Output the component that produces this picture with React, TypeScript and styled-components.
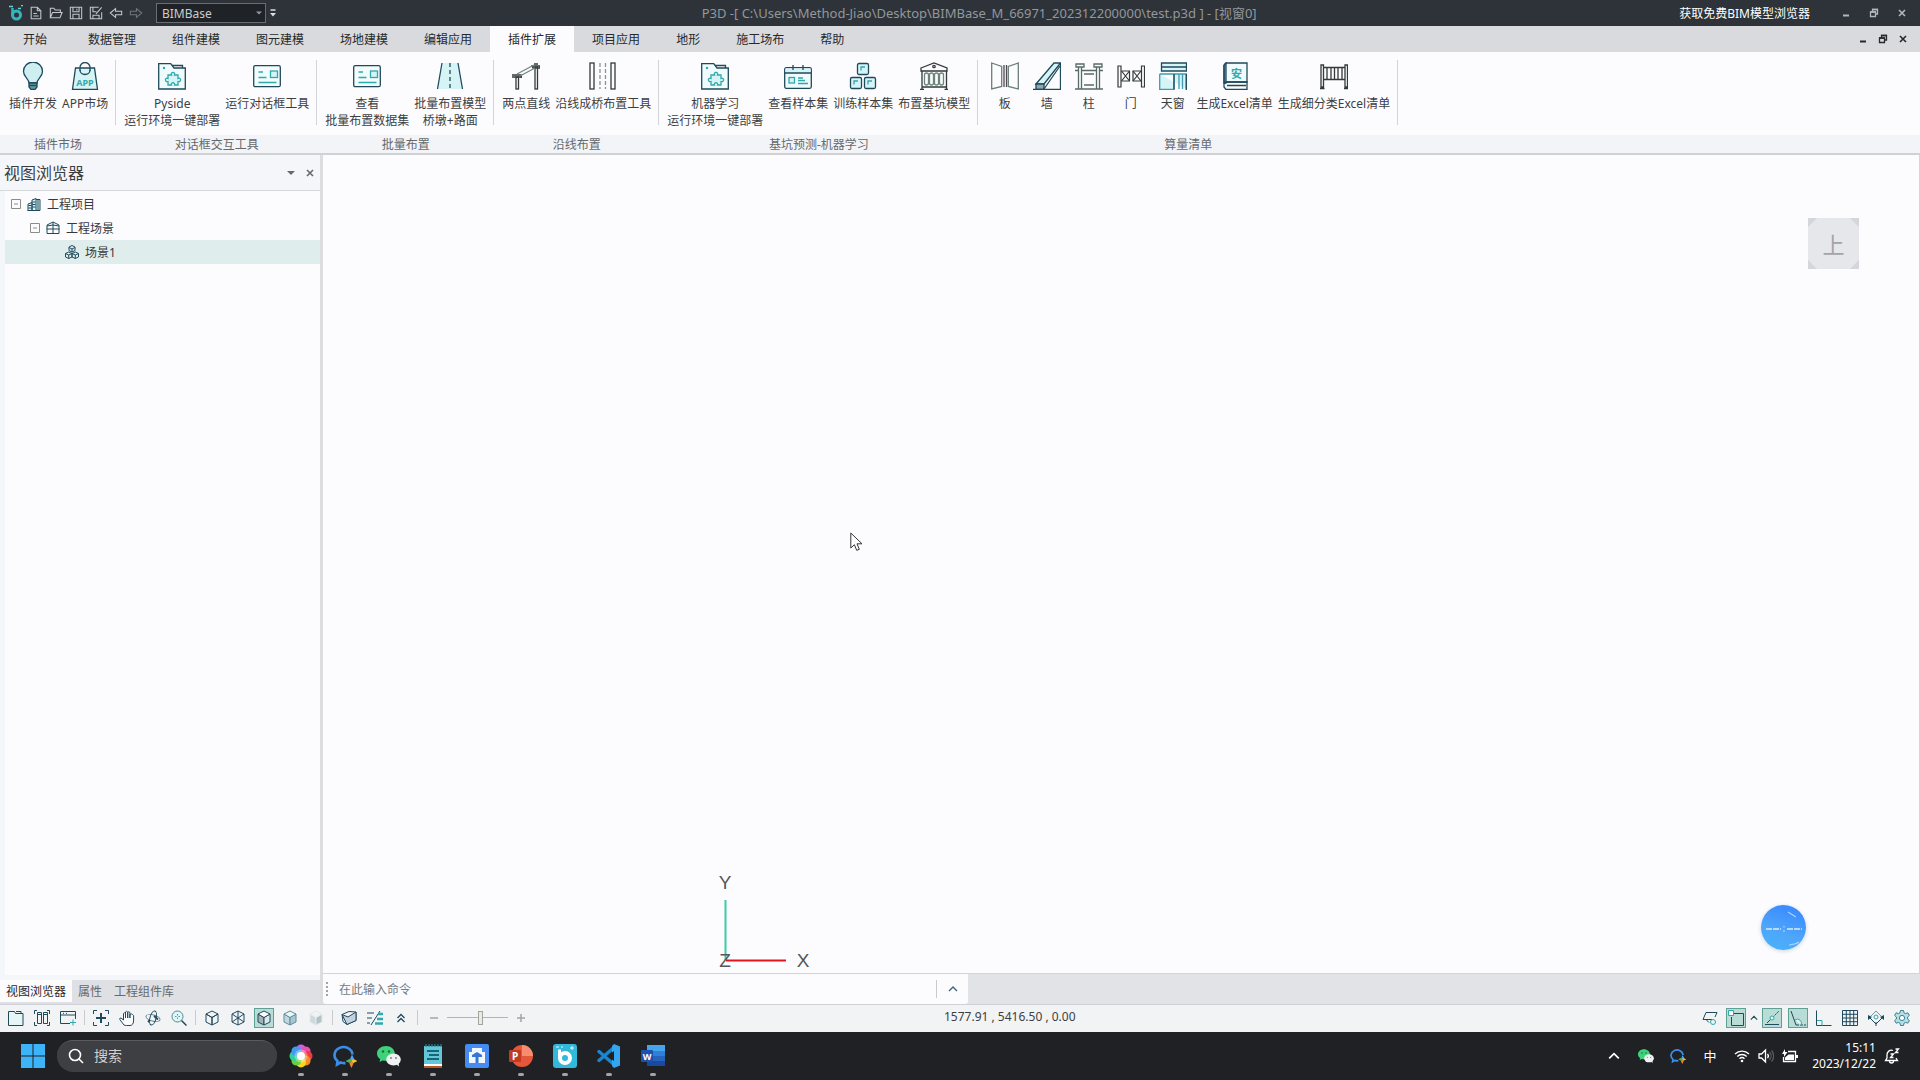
import React from "react";
import styled, { createGlobalStyle, css } from "styled-components";

const GlobalStyle = createGlobalStyle`
  *, *::before, *::after { box-sizing: border-box; }
  body {
    margin: 0;
    background: #fcfcfe;
    color: #3c3f42;
    font: 12px/17px "Noto Sans", "Noto Sans CJK SC", sans-serif;
  }
  button, input, select { font: inherit; color: inherit; }
  svg { flex: none; }
`;

const teal = "#2fa9ab";
const navy = "#1f4a5c";
const pale = "#d6f4f6";

/* ---------- layout ---------- */

const Shell = styled.div`
  display: flex;
  flex-direction: column;
  min-height: 100vh;
`;

const plainButton = css`
  display: inline-flex;
  align-items: center;
  justify-content: center;
  padding: 0;
  border: 0;
  background: none;
`;

const TitleBar = styled.header`
  display: flex;
  align-items: center;
  height: 26px;
  padding: 0 4px 0 6px;
  background: #2d3339;
  color: #94979b;
`;

const TitleTool = styled.button<{ $dim?: boolean }>`
  ${plainButton}
  width: 20px;
  height: 20px;
  color: ${(p) => (p.$dim ? "#70757a" : "#c4c7ca")};
`;

const ProductSelect = styled.select`
  appearance: none;
  width: 110px;
  height: 20px;
  margin-left: 10px;
  padding: 0 5px;
  border: 1px solid #6a6e72;
  border-radius: 0;
  background: #1f2327;
  color: #c9cbce;
`;

const SelectWrap = styled.label`
  display: flex;
  align-items: center;
  position: relative;
  & > svg { position: absolute; right: 4px; pointer-events: none; }
`;

const QuickMenu = styled.button`
  ${plainButton}
  width: 13px;
  height: 20px;
`;

const WindowTitle = styled.h1`
  flex: 1;
  margin: 0;
  font-size: 13px;
  font-weight: 400;
  text-align: center;
`;

const ViewerLink = styled.a`
  color: #ffffff;
  text-decoration: none;
  margin-right: 22px;
`;

const WindowButton = styled.button<{ $dark?: boolean }>`
  ${plainButton}
  width: ${(p) => (p.$dark ? 20 : 28)}px;
  height: 20px;
  color: ${(p) => (p.$dark ? "#26292c" : "#b4b7ba")};
`;

const TabBar = styled.nav`
  display: flex;
  height: 26px;
  background: #d9dade;
`;

const Tab = styled.button<{ $active?: boolean; $wide?: boolean }>`
  ${plainButton}
  padding: 1px ${(p) => (p.$wide ? 23 : 18)}px 0;
  background: ${(p) => (p.$active ? "#fcfcfe" : "transparent")};
  color: #26292c;
`;

const TabSpacer = styled.div`
  flex: 1;
`;

const TabWindowButtons = styled.div`
  display: flex;
  align-items: center;
  padding-right: 7px;
`;

const Ribbon = styled.div`
  display: flex;
  border-bottom: 2px solid #d0d1d3;
`;

const Group = styled.section<{ $fill?: boolean }>`
  display: flex;
  flex-direction: column;
  flex: ${(p) => (p.$fill ? 1 : "none")};
`;

const GroupBody = styled.div<{ $first?: boolean }>`
  display: flex;
  gap: 1px;
  height: 65px;
  margin: 8px 0 10px;
  padding: 0 5px 0 ${(p) => (p.$first ? 7 : 6)}px;
  border-right: 1px solid #d3d3d8;
`;

const GroupLabel = styled.h2`
  height: 18px;
  margin: 0;
  background: #f3f4f8;
  color: #66696c;
  font-size: 12px;
  font-weight: 400;
  line-height: 20px;
  text-align: center;
`;

const RibbonButton = styled.button`
  ${plainButton}
  flex-direction: column;
  justify-content: flex-start;
  gap: 5px;
  min-width: 41px;
  padding: 2px 2px 0;
  color: #3c3f42;
  white-space: pre;
`;

const Main = styled.main`
  display: flex;
  flex: 1;
`;

const SidePanel = styled.aside`
  display: flex;
  flex-direction: column;
  width: 323px;
  border-right: 3px solid #dcdde0;
  background: #f5f6fa;
`;

const PanelHeader = styled.div`
  display: flex;
  align-items: center;
  height: 36px;
  padding: 0 1px 0 4px;
  border-bottom: 1px solid #d6d8da;
`;

const PanelTitle = styled.h2`
  flex: 1;
  margin: 0;
  font-size: 16px;
  font-weight: 400;
  line-height: 24px;
`;

const PanelTool = styled.button`
  ${plainButton}
  width: 19px;
  height: 19px;
  color: #66696c;
`;

const Tree = styled.ul`
  flex: 1;
  margin: 0 0 5px 5px;
  padding: 1px 0 0;
  background: #fcfcfe;
  list-style: none;
`;

const TreeRow = styled.li<{ $level: number; $selected?: boolean }>`
  display: flex;
  align-items: center;
  gap: 6px;
  height: 24px;
  padding-left: ${(p) => 6 + p.$level * 19}px;
  background: ${(p) => (p.$selected ? "#dfeeed" : "transparent")};
  color: #36393c;
`;

const ExpandButton = styled.button`
  ${plainButton}
  width: 10px;
  height: 10px;
  color: #8b8e86;
`;

const ExpandGap = styled.span`
  width: 10px;
`;

const PanelTabs = styled.div`
  display: flex;
  height: 24px;
  padding-bottom: 2px;
  background: #dfe0e4;
`;

const PanelTab = styled.button<{ $active?: boolean }>`
  ${plainButton}
  padding: 0 6px;
  background: ${(p) => (p.$active ? "#fcfcfe" : "transparent")};
  color: ${(p) => (p.$active ? "#26292c" : "#66696c")};
`;

const Workspace = styled.div`
  display: flex;
  flex: 1;
  flex-direction: column;
`;

const Viewport = styled.div`
  position: relative;
  flex: 1;
  border-right: 1px solid #d6d6da;
  background: #fcfcfe;
`;

const ViewCube = styled.button`
  ${plainButton}
  position: absolute;
  top: 63px;
  right: 60px;
  width: 51px;
  height: 51px;
  background:
    linear-gradient(135deg, #d4d6dc 6px, transparent 7px),
    linear-gradient(225deg, #d4d6dc 6px, transparent 7px),
    linear-gradient(45deg, #d4d6dc 6px, transparent 7px),
    linear-gradient(315deg, #d4d6dc 6px, #e5e7ea 7px);
  color: #a2a4a8;
  font-size: 22px;
  line-height: 30px;
`;

const AssistBall = styled.button`
  ${plainButton}
  position: absolute;
  right: 113px;
  bottom: 23px;
  width: 45px;
  height: 45px;
  border-radius: 50%;
  background: linear-gradient(200deg, #3b8cff 15%, #4ea6fa 60%, #48b4fb);
  box-shadow: 0 1px 4px #c8d4e4;
`;

const Axes = styled.svg`
  position: absolute;
  bottom: 0;
  left: 387px;
  font-family: "Liberation Sans", sans-serif;
`;

const Pointer = styled.svg`
  position: absolute;
  top: 377px;
  left: 527px;
`;

const CommandRow = styled.div`
  display: flex;
  height: 31px;
  border-top: 1px solid #d3d4d8;
  background: #e2e3e6;
`;

const CommandBox = styled.div`
  display: flex;
  align-items: center;
  width: 645px;
  padding-left: 3px;
  border-radius: 0 0 3px 3px;
  background: #fcfcfe;
`;

const Grip = styled.span`
  width: 2px;
  height: 14px;
  margin-right: 6px;
  background: repeating-linear-gradient(#a0a2a4 0 2px, transparent 2px 4px);
`;

const CommandInput = styled.input`
  flex: 1;
  padding: 0 5px;
  border: 0;
  outline: 0;
  background: transparent;
  &::placeholder { color: #77797c; opacity: 1; }
`;

const CommandToggle = styled.button`
  ${plainButton}
  width: 32px;
  height: 18px;
  border-left: 1px solid #c8cacc;
  color: #41657a;
`;

const StatusBar = styled.footer`
  display: flex;
  align-items: center;
  height: 28px;
  padding: 0 5px 2px 3px;
  border-top: 1px solid #d0d1d6;
  background: #f1f3f5;
`;

const StatusTools = styled.div<{ $end?: boolean }>`
  display: flex;
  align-items: center;
  margin-left: ${(p) => (p.$end ? "auto" : "0")};
`;

const StatusTool = styled.button<{ $on?: boolean; $narrow?: boolean }>`
  ${plainButton}
  width: ${(p) => (p.$narrow ? 10 : 20)}px;
  height: 20px;
  margin: 0 ${(p) => (p.$narrow ? 0 : 3)}px;
  color: ${navy};
  ${(p) =>
    p.$on &&
    css`
      background: #b9dcd6;
      box-shadow: inset 0 0 0 1px #5fa095;
    `}
`;

const Divider = styled.span`
  width: 1px;
  height: 15px;
  margin: 0 3px;
  background: #c8cacd;
`;

const ZoomSlider = styled.input`
  appearance: none;
  width: 61px;
  height: 16px;
  margin: 0;
  background: linear-gradient(#b4b5b2, #b4b5b2) center / 100% 1px no-repeat;
  &::-webkit-slider-thumb {
    appearance: none;
    width: 5px;
    height: 14px;
    border: 1px solid #a3a49c;
    background: #e9eae6;
  }
`;

const Coordinates = styled.output`
  align-self: flex-start;
  margin-left: 410px;
  line-height: 24px;
  white-space: pre;
`;

const Taskbar = styled.footer`
  display: flex;
  align-items: center;
  height: 48px;
  padding: 0 16px 0 21px;
  background: #202125;
  color: #ffffff;
`;

const StartButton = styled.button`
  ${plainButton}
  width: 24px;
  height: 24px;
`;

const SearchBox = styled.label`
  display: flex;
  align-items: center;
  gap: 10px;
  width: 220px;
  height: 32px;
  margin: 0 2px 0 12px;
  padding: 0 11px 2px;
  border-top: 1px solid #5a5b5e;
  border-radius: 16px;
  background: #3e3f42;
`;

const SearchInput = styled.input`
  flex: 1;
  min-width: 0;
  padding: 0;
  border: 0;
  outline: 0;
  background: transparent;
  font-size: 14px;
  &::placeholder { color: #d0d1d3; opacity: 1; }
`;

const TaskButton = styled.button`
  ${plainButton}
  flex-direction: column;
  gap: 5px;
  width: 44px;
  height: 48px;
  padding-top: 8px;
  &::after {
    content: "";
    width: 6px;
    height: 3px;
    border-radius: 2px;
    background: #a3a4a6;
  }
`;

const Tray = styled.div`
  display: flex;
  align-items: center;
  margin-left: auto;
`;

const TrayButton = styled.button<{ $tight?: boolean }>`
  ${plainButton}
  width: ${(p) => (p.$tight ? 24 : 32)}px;
  height: 32px;
`;

const InputMode = styled.span`
  font-size: 13px;
`;

const QuickSettings = styled.div`
  display: flex;
  margin-left: 4px;
`;

const Clock = styled.time`
  width: 74px;
  margin-right: 4px;
  line-height: 16px;
  text-align: right;
`;

/* ---------- drawings ---------- */

type IconProps = { size?: number; box?: number; w?: number; children: React.ReactNode };

const Icon = ({ size = 16, box, w = 1, children }: IconProps) => (
  <svg
    width={size}
    height={size}
    viewBox={`0 0 ${box ?? size} ${box ?? size}`}
    fill="none"
    stroke="currentColor"
    strokeWidth={w}
    aria-hidden="true"
  >
    {children}
  </svg>
);

const RIcon = ({ children }: { children: React.ReactNode }) => (
  <svg width="28" height="28" viewBox="0 0 28 28" fill="none" stroke={navy} strokeWidth="1.3" aria-hidden="true">
    {children}
  </svg>
);

const Bulb = () => (
  <RIcon>
    <path d="M10 21c0-4-5.500-6-5.500-11.500a9.500 9.500 0 0 1 19 0C23.500 15 18 17 18 21z" fill="#cdeff0" />
    <path d="M10 21h8v4l-2 2.500h-4L10 25z" fill="#5f98a0" />
    <path d="M10 23.500h8" />
  </RIcon>
);

const AppBag = () => (
  <RIcon>
    <path d="M4.500 6h19l3 21.400h-25z" fill={pale} />
    <path d="M9 9V5.500a5 5 0 0 1 10 0V9" />
    <path d="M9 8a5 4.500 0 0 0 10 0" />
    <text x="14" y="23.500" textAnchor="middle" fontSize="9" fontWeight="700" fill={teal} stroke="none">
      APP
    </text>
  </RIcon>
);

const PuzzleFolder = () => (
  <RIcon>
    <path d="M.7 27V1.700h12L16 6h11.300v21z" fill="#effbfc" />
    <path d="M14 3.500h10.500V6" />
    <circle cx="6" cy="6" r="1.200" fill={teal} stroke="none" />
    <path
      d="M10 13h3.500c-1.500-3.500 4.500-3.500 3 0H20v3.500c3.500-1.500 3.500 4 0 3V23h-3.500c1-3-4-3-3 0H10v-3.500c-3.500 1-3.500-4.500 0-3z"
      fill={pale}
      stroke={teal}
    />
  </RIcon>
);

const CardIcon = () => (
  <RIcon>
    <rect x=".7" y="3.700" width="26.600" height="21" rx="1.500" fill="#f2fcfd" />
    <rect x="17.500" y="9" width="7" height="6.500" fill={pale} stroke={teal} />
    <path d="M5.500 10H10M5.500 15.500h8M5.500 20.500h18" stroke={teal} />
  </RIcon>
);

const RoadIcon = () => (
  <RIcon>
    <path d="M7 1h15l4 26H2z" fill={pale} stroke="none" />
    <path d="M6 1L1.500 27M22 1l4.500 26" />
    <path d="M14 1v26" strokeDasharray="4 3" />
  </RIcon>
);

const TwoPointIcon = () => (
  <RIcon>
    <g stroke="#33393c">
      <rect x="4" y="15" width="2.500" height="12" />
      <rect x="23" y="5" width="2.500" height="22" />
      <path d="M0 15h10M0 13h9v3M20 4h8v2h-7zM22 2h4" />
      <path d="M5 12L22 3M8 14L23 6" stroke="#75857e" />
    </g>
  </RIcon>
);

const BridgeLineIcon = () => (
  <RIcon>
    <g stroke="#33393c">
      <rect x="1" y="1" width="4" height="26" />
      <rect x="22" y="1" width="4" height="26" />
      <path d="M11 1v26M16.500 1v26" stroke="#8b9297" strokeDasharray="4 2" />
    </g>
  </RIcon>
);

const CalendarIcon = () => (
  <RIcon>
    <rect x=".7" y="5.700" width="26.600" height="20.600" rx="1.500" fill="#effbfc" />
    <path d="M1.400 6.400h25.200v4H1.400z" fill={pale} stroke="none" />
    <path d="M.7 11h26.600M9 3v5M19 3v5" />
    <rect x="5" y="15.500" width="5.500" height="5.500" fill={pale} stroke={teal} />
    <path d="M14 16h5M14 18.500h7M14 21.500h10" stroke={teal} />
  </RIcon>
);

const BlocksIcon = () => (
  <RIcon>
    <g fill={pale}>
      <rect x="8.500" y="1.500" width="11" height="11" rx="1.500" />
      <rect x="1.500" y="15.500" width="11" height="11" rx="1.500" />
      <rect x="15.500" y="15.500" width="11" height="11" rx="1.500" />
    </g>
    <path d="M12 8.500V5h4M5 22.500V19h4M19 22.500V19h4" stroke={teal} />
  </RIcon>
);

const PitIcon = () => (
  <RIcon>
    <g stroke="#33393c">
      <path d="M1 6l13-5 13 5v3H1zM2 9v18M26.500 9v18M2 25h24.500M0 27.500h4M24.500 27.500h3.500" />
      <circle cx="14" cy="4.500" r="1.200" />
      <g stroke="#6c8579">
        <rect x="4.500" y="11" width="4" height="12" rx="2" />
        <rect x="9.500" y="11" width="4" height="12" rx="2" />
        <rect x="14.500" y="11" width="4" height="12" rx="2" />
        <rect x="19.500" y="11" width="4" height="12" rx="2" />
      </g>
    </g>
  </RIcon>
);

const SlabIcon = () => (
  <RIcon>
    <g stroke="#6c7f76">
      <path d="M.7 1l10 3.500v20L.7 27zM27.300 1l-10 3.500v20l10 2.500z" />
      <path d="M13 3v22M15.500 3v22" stroke="#4c4c52" />
    </g>
  </RIcon>
);

const WallIcon = () => (
  <RIcon>
    <path d="M3 22L21 1h6.500L11 22z" fill={pale} />
    <path d="M3 22h8v5.300H3z" fill="#8fa9b4" />
    <path d="M0 27.400h27.500V1M11 27L27 4" />
  </RIcon>
);

const ColumnIcon = () => (
  <RIcon>
    <g stroke="#586a68">
      <path d="M1 2h8v3H1zM19 2h8v3h-8zM3.500 5v22M6.500 5v22M21.500 5v22M24.500 5v22" />
      <path d="M0 8.500h3M7 8.500h14M25 8.500h3M9 12h10M9 23h10M0 27h28" />
    </g>
  </RIcon>
);

const DoorIcon = () => (
  <RIcon>
    <g stroke="#33393c" strokeWidth="1.2">
      <path d="M1 4h3v21H1zM24.500 4h3v21h-3z" />
      <path d="M4.500 9h8v10h-8M24 9h-8v10h8" />
      <path d="M4.500 9l8 10M12.500 9l-8 10M16 9l8 10M24 9l-8 10" />
    </g>
  </RIcon>
);

const SkylightIcon = () => (
  <RIcon>
    <path d="M2.500 1h25v8h-25zM2.500 5h25" fill={pale} />
    <path d="M.7 12h26.600v15M20 12v15M23.500 12v15M.7 12v15.300H15V12" fill={pale} stroke="#3f9cb0" />
    <path d="M15 12v15.500M27.300 12v16" />
  </RIcon>
);

const BookIcon = () => (
  <RIcon>
    <path d="M5 1h21v19H4V2z" fill="#effbfc" />
    <path d="M3 3l2-2v20H3z" fill="#8fb4c0" />
    <path d="M3 3v22l2 2.500h21V20H5l-2 2M6 23.500h19" />
    <text x="15.500" y="15.500" textAnchor="middle" fontSize="11" fontWeight="700" fill={teal} stroke="none">
      安
    </text>
  </RIcon>
);

const FenceIcon = () => (
  <RIcon>
    <g stroke="#33393c">
      <path d="M1 3h2.500v22H1zM25 3h2.500v22H25zM0 26.500h4.500M24 26.500h4.500M3.500 5.500H25M3.500 17.500H25M7 5.500v12M11 5.500v12M14.500 5.500v12M18 5.500v12M22 5.500v12" />
    </g>
  </RIcon>
);

const Chevron = ({ size = 10 }: { size?: number }) => (
  <Icon size={size} box={10} w={1.4}>
    <path d="M1 7l4-4 4 4" />
  </Icon>
);

const CaretDown = ({ size = 8 }: { size?: number }) => (
  <Icon size={size} box={8}>
    <path d="M0 2h8L4 6z" fill="currentColor" stroke="none" />
  </Icon>
);

const MinIcon = () => (
  <Icon size={10}>
    <path d="M2 7.500h6" strokeWidth="2" />
  </Icon>
);

const RestoreIcon = () => (
  <Icon size={10}>
    <path d="M1.500 4h5v4.500h-5zM3.500 4V1.500h5V6h-2" strokeWidth="1.300" />
    <path d="M1 4h6M3 1.500h6" strokeWidth="1.500" />
  </Icon>
);

const CloseIcon = () => (
  <Icon size={10}>
    <path d="M2 2l6 6M8 2L2 8" strokeWidth="1.600" />
  </Icon>
);

const Cube = ({ left = "none", right = "none", top = "none", line = navy }) => (
  <Icon size={16}>
    <g stroke={line} strokeLinejoin="round">
      <path d="M2 4l6 3.500V15l-6-3z" fill={left} />
      <path d="M14 4L8 7.500V15l6-3z" fill={right} />
      <path d="M8 1l6 3-6 3.500L2 4z" fill={top} />
    </g>
  </Icon>
);

const WeChat = ({ size = 24 }: { size?: number }) => (
  <Icon size={size} box={24}>
    <g stroke="none">
      <path d="M9 2C4 2 0 5.300 0 9.500c0 2.400 1.200 4.300 3.200 5.700L2.500 18l3.200-1.600c1 .3 2.200.4 3.300.4 5 0 8.800-3.300 8.800-7.300S14 2 9 2z" fill="#3fd27b" />
      <ellipse cx="16.500" cy="15.500" rx="7.300" ry="6" fill="#f0f1f2" />
      <path d="M19 20l3 2.500-.5-4z" fill="#f0f1f2" />
      <circle cx="6" cy="7.500" r="1.200" fill="#1a6e3e" />
      <circle cx="12" cy="7.500" r="1.200" fill="#1a6e3e" />
      <circle cx="14" cy="14" r=".9" fill="#777" />
      <circle cx="19" cy="14" r=".9" fill="#777" />
    </g>
  </Icon>
);

const WeCom = ({ size = 24 }: { size?: number }) => (
  <Icon size={size} box={24}>
    <path d="M19.500 10.500a9 8 0 1 0-15 6.500L4 20.500l3.500-2a11 11 0 0 0 5 .6" stroke="#3a8ee8" strokeWidth="2.600" />
    <path d="M19 10.500l2.200 4.500-2.200 2-2-2z" fill="#4aa5f5" stroke="none" />
    <path d="M24.500 17L20 19.200 18 17l2.500-2z" fill="#f7c22b" stroke="none" />
    <path d="M18.500 24l-2.200-4.500 2.200-2.500 2 2.500z" fill="#f08a24" stroke="none" />
    <path d="M12.500 17l4.500-2.200L19 17l-2.500 2z" fill="#52b551" stroke="none" />
  </Icon>
);

const petals = ["#c565ea", "#ee4fae", "#ee3b3b", "#f58a28", "#f3d723", "#6dcf3c", "#2fd09a", "#3f9cf0"];

const PinWheel = () => (
  <Icon size={24}>
    <g stroke="none">
      {petals.map((c, i) => (
        <circle key={c} cx="12" cy="5.500" r="5" fill={c} transform={`rotate(${i * 45} 12 12)`} />
      ))}
      <path d="M12 5.500A6.500 6.500 0 0 1 12 18.500 6.500 6.500 0 0 1 12 5.500z" fill="#ffffff" opacity=".35" />
      <circle cx="12" cy="12" r="4" fill="#ffffff" />
    </g>
  </Icon>
);

const Notepad = () => (
  <Icon size={24}>
    <g stroke="none">
      <path d="M3 2h18v19H3z" fill="#64c6d6" />
      <path d="M3 20h18v2H3z" fill="#ffffff" />
      <path d="M3 22h18v2H3z" fill="#b5562c" />
    </g>
    <path d="M5 0v3M8 0v3M11 0v3M14 0v3M17 0v3M20 0v3" stroke="#2f8191" strokeWidth="1.200" />
    <path d="M6 7h12M8 11h10M6 15h12" stroke="#16667a" strokeWidth="2" />
  </Icon>
);

const BlueTool = () => (
  <Icon size={24}>
    <g stroke="none">
      <rect width="24" height="24" rx="2" fill="#458cf2" />
      <path d="M4 8h3V4h10v4h3v11H4z" fill="#f2f7ff" />
      <path d="M12 8l5 3v2h-3.500v6h-3v-6H7v-2z" fill="#3577d4" />
    </g>
  </Icon>
);

const PowerPoint = () => (
  <Icon size={24}>
    <g stroke="none">
      <circle cx="13" cy="12" r="11" fill="#e5573a" />
      <path d="M13 1a11 11 0 0 1 11 11H13z" fill="#f78d70" />
      <rect y="6" width="12" height="12" rx="1" fill="#bf3a1e" />
      <text x="6" y="16" textAnchor="middle" fontSize="10" fontWeight="700" fill="#ffffff">
        P
      </text>
    </g>
  </Icon>
);

const BimApp = () => (
  <Icon size={24}>
    <rect width="24" height="24" rx="3" fill="#32b8d8" stroke="none" />
    <circle cx="12" cy="14" r="5" stroke="#ffffff" strokeWidth="4" />
    <path d="M6.500 5.500V14" stroke="#ffffff" strokeWidth="3" />
    <path d="M17 4h4M19 2v4M3 3h3M8 3h2" stroke="#dff8fb" />
  </Icon>
);

const VsCode = () => (
  <Icon size={24}>
    <path d="M2 7.500L17.500 21M2 16.500L17.500 3" stroke="#1a86cf" strokeWidth="3.400" strokeLinecap="round" />
    <path d="M17 0l6 2.500v19L17 24l-2-2V2z" fill="#35a5ee" stroke="none" />
    <path d="M17 7v10l-6.500-5z" fill="#202125" stroke="none" />
  </Icon>
);

const Word = () => (
  <Icon size={24}>
    <g stroke="none">
      <path d="M6 1h18v7H6z" fill="#46a4ee" />
      <path d="M6 7h18v5H6z" fill="#2f7fd9" />
      <path d="M6 12h18v5H6z" fill="#2563bd" />
      <path d="M6 17h18v5H6z" fill="#1a4aa0" />
      <rect y="6" width="12" height="12" rx="1" fill="#1c52ad" />
      <text x="6" y="15.500" textAnchor="middle" fontSize="9" fontWeight="700" fill="#ffffff">
        W
      </text>
    </g>
  </Icon>
);

/* ---------- data ---------- */

const tabs = ["开始", "数据管理", "组件建模", "图元建模", "场地建模", "编辑应用", "插件扩展", "项目应用", "地形", "施工场布", "帮助"];

const groups: { name: string; items: [string, React.ReactNode][] }[] = [
  { name: "插件市场", items: [["插件开发", <Bulb />], ["APP市场", <AppBag />]] },
  { name: "对话框交互工具", items: [["Pyside\n运行环境一键部署", <PuzzleFolder />], ["运行对话框工具", <CardIcon />]] },
  { name: "批量布置", items: [["查看\n批量布置数据集", <CardIcon />], ["批量布置模型\n桥墩+路面", <RoadIcon />]] },
  { name: "沿线布置", items: [["两点直线", <TwoPointIcon />], ["沿线成桥布置工具", <BridgeLineIcon />]] },
  {
    name: "基坑预测-机器学习",
    items: [
      ["机器学习\n运行环境一键部署", <PuzzleFolder />],
      ["查看样本集", <CalendarIcon />],
      ["训练样本集", <BlocksIcon />],
      ["布置基坑模型", <PitIcon />],
    ],
  },
  {
    name: "算量清单",
    items: [
      ["板", <SlabIcon />],
      ["墙", <WallIcon />],
      ["柱", <ColumnIcon />],
      ["门", <DoorIcon />],
      ["天窗", <SkylightIcon />],
      ["生成Excel清单", <BookIcon />],
      ["生成细分类Excel清单", <FenceIcon />],
    ],
  },
];

const titleTools: [string, React.ReactNode][] = [
  ["新建", <path d="M2.500 1.500h7l4 4v9h-11zM9.500 1.500v4h4M5 8.500h4M5 11.500h6" />],
  ["打开", <path d="M1.500 13.500v-11h4l1.500 2h6v3M1.500 13.500l2.500-6h11l-2.500 6z" />],
  ["保存", <path d="M1.500 1.500h13v13h-13zM4.500 1.500v5h7v-5M4.500 14.500v-5h7v5M9 3v2" />],
  ["另存为", <path d="M14.500 7v7.500h-13v-13H11M4.500 1.500v5h4M4.500 14.500v-4h7v4M8 9l6.500-7.500" />],
  ["撤销", <path d="M1.500 8l6-5v3h7v4h-7v3z" />],
  ["重做", <path d="M14.500 8l-6-5v3h-7v4h7v3z" />],
];

const fileTools: [string, React.ReactNode][] = [
  ["打开视图", <path d="M.5 15.500V1.500h6l1 2h7.500v12zM8 1.500h5v2" fill="#e6f6f7" />],
  ["平铺视图", <path d="M3.500 2.500h4v11h-4zM9.500 2.500h4v11h-4zM3.500 4.500h4M9.500 4.500h4M.5 4V.5H3M.5 12v3.500H3M15.500 4V.5H13M15.500 12v3.500H13" />],
  ["新建视图", <><path d="M10 13.500H.5v-12h15V9M.5 5h15M3 3.300h1M6 3.300h1" /><path d="M13 9.500v6M10 12.500h6" stroke={teal} /></>],
];

const viewTools: [string, React.ReactNode][] = [
  ["全图", <><path d="M.5 4V.5H4M12 .5h3.500V4M.5 12v3.500H4M12 15.500h3.500V12" /><path d="M8 3v10M3 8h10" strokeWidth="2" /></>],
  ["平移", <path d="M5 15L.8 9.500Q.3 8 2 8l2.500 2V3.500q1-1.500 2 0V8 2q1-1.500 2.200 0v6V2.500q1-1.500 2.200 0V8 4.500q1.300-1.300 2.500 0l1.200 1V11q-.5 4.500-3.600 4.500H7.500q-1.500 0-2.500-.5z" fill="#fcfcfe" />],
  ["动态观察", <><ellipse cx="8" cy="8" rx="7.200" ry="3" stroke="#6b8794" transform="rotate(15 8 8)" /><ellipse cx="8" cy="8" rx="3" ry="7.200" transform="rotate(15 8 8)" /><path d="M9 6l4 3.500M5 10l-2 2" strokeWidth="1.800" /></>],
  ["缩放", <><circle cx="6.500" cy="6.500" r="5.500" fill="#e2f5f6" stroke="#4d8b94" /><path d="M10.500 10.500l5 5" strokeWidth="1.500" /><path d="M6.500 4v1.500M6.500 7.500V9M4 6.500h1.500M7.500 6.500H9" stroke={teal} /></>],
];

const snapTools: [string, boolean, React.ReactNode][] = [
  ["捕捉", true, <><path d="M1 14.500h14M3 13l5-5" /><path d="M9 7l6-6" strokeDasharray="2 1" /><circle cx="8" cy="8" r="2" fill="#e2f5f6" stroke={teal} /></>],
  ["极轴", true, <><path d="M1 1l5 14" /><path d="M6 15h10" strokeDasharray="3 1" /><path d="M5 10a4 4 0 0 1 6 5" stroke={teal} fill="#e2f5f6" /></>],
  ["正交", false, <><path d="M.5.500v15h15" /><path d="M1 10.500h5v5" stroke={teal} /></>],
  ["栅格", false, <path d="M.5.500h15v15H.500zM4.300.500v15M8 .5v15M11.700.500v15M.5 4.300h15M.5 8h15M.5 11.700h15" />],
];

const taskApps: [string, React.ReactNode][] = [
  ["浏览器", <PinWheel />],
  ["企业微信", <WeCom />],
  ["微信", <WeChat />],
  ["记事本", <Notepad />],
  ["工具箱", <BlueTool />],
  ["PowerPoint", <PowerPoint />],
  ["BIMBase", <BimApp />],
  ["VS Code", <VsCode />],
  ["Word", <Word />],
];

/* ---------- page ---------- */

export default function App() {
  return (
    <Shell>
      <GlobalStyle />
      <TitleBar>
        <TitleTool aria-label="BIMBase">
          <Icon size={16}>
            <circle cx="8.500" cy="10" r="4" stroke="#35b5bb" strokeWidth="3" />
            <path d="M4.500 3v7" stroke="#35b5bb" strokeWidth="2.500" />
            <path d="M1 1.500h4M10 3.500h3M13 .5h2" stroke="#6bd0d2" strokeWidth="1.500" />
          </Icon>
        </TitleTool>
        {titleTools.map(([label, drawing], i) => (
          <TitleTool key={label} aria-label={label} $dim={i === 5}>
            <Icon size={14} box={16} w={1.2}>{drawing}</Icon>
          </TitleTool>
        ))}
        <SelectWrap>
          <ProductSelect aria-label="产品">
            <option>BIMBase</option>
          </ProductSelect>
          <CaretDown size={6} />
        </SelectWrap>
        <QuickMenu aria-label="自定义快速访问工具栏">
          <Icon size={8}>
            <path d="M1.500 1h5" stroke="#dcdee0" strokeWidth="1.500" />
            <path d="M1 4h6L4 7.500z" fill="#dcdee0" stroke="none" />
          </Icon>
        </QuickMenu>
        <WindowTitle>P3D -[ C:\Users\Method-Jiao\Desktop\BIMBase_M_66971_202312200000\test.p3d ] - [视窗0]</WindowTitle>
        <ViewerLink href="#viewer">获取免费BIM模型浏览器</ViewerLink>
        <WindowButton aria-label="最小化"><MinIcon /></WindowButton>
        <WindowButton aria-label="还原"><RestoreIcon /></WindowButton>
        <WindowButton aria-label="关闭"><CloseIcon /></WindowButton>
      </TitleBar>

      <TabBar>
        {tabs.map((t, i) => (
          <Tab key={t} $wide={i === 0} $active={t === "插件扩展"}>{t}</Tab>
        ))}
        <TabSpacer />
        <TabWindowButtons>
          <WindowButton $dark aria-label="最小化视图"><MinIcon /></WindowButton>
          <WindowButton $dark aria-label="还原视图"><RestoreIcon /></WindowButton>
          <WindowButton $dark aria-label="关闭视图"><CloseIcon /></WindowButton>
        </TabWindowButtons>
      </TabBar>

      <Ribbon>
        {groups.map((g, i) => (
          <Group key={g.name}>
            <GroupBody $first={i === 0}>
              {g.items.map(([label, icon]) => (
                <RibbonButton key={label}>
                  {icon}
                  <span>{label}</span>
                </RibbonButton>
              ))}
            </GroupBody>
            <GroupLabel>{g.name}</GroupLabel>
          </Group>
        ))}
        <Group $fill>
          <TabSpacer />
          <GroupLabel as="div" />
        </Group>
      </Ribbon>

      <Main>
        <SidePanel>
          <PanelHeader>
            <PanelTitle>视图浏览器</PanelTitle>
            <PanelTool aria-label="面板菜单"><CaretDown /></PanelTool>
            <PanelTool aria-label="关闭面板"><CloseIcon /></PanelTool>
          </PanelHeader>
          <Tree>
            <TreeRow $level={0}>
              <ExpandButton aria-label="折叠工程项目">
                <Icon size={10}><path d="M.5.500h9v9h-9zM3 5h4" /></Icon>
              </ExpandButton>
              <Icon size={14}>
                <path d="M1 13.500V7l4-1.500v8M5 13.500V3l4-1.500v12M9 2.500h4v11H.5M1.500 8.500h3M1.500 11h3M5.500 5h3M5.500 7.500h3M5.500 10h3M11 2.500v11" stroke={navy} fill={pale} />
              </Icon>
              <span>工程项目</span>
            </TreeRow>
            <TreeRow $level={1}>
              <ExpandButton aria-label="折叠工程场景">
                <Icon size={10}><path d="M.5.500h9v9h-9zM3 5h4" /></Icon>
              </ExpandButton>
              <Icon size={14}>
                <path d="M1 4l6-3 6 3v8.500H1zM.5 8h13M7 1v12M1 5l6-1 6 1" stroke={navy} />
              </Icon>
              <span>工程场景</span>
            </TreeRow>
            <TreeRow $level={2} $selected>
              <ExpandGap />
              <Icon size={14}>
                <path d="M7 .5l3 1.500v3.500L7 7 4 5.500V2zM3.700 7L7 8.500V12l-3.300 1.500L.5 12V8.500zM10.300 7l3.200 1.500V12l-3.200 1.500L7 12V8.500zM4 2.500L7 4l3-1.500M7 4v3M.5 8.500l3.200 1.500L7 8.500l3.300 1.500 3.200-1.500M3.700 10v3.500M10.300 10v3.500" stroke={navy} />
              </Icon>
              <span>场景1</span>
            </TreeRow>
          </Tree>
          <PanelTabs>
            <PanelTab $active>视图浏览器</PanelTab>
            <PanelTab>属性</PanelTab>
            <PanelTab>工程组件库</PanelTab>
          </PanelTabs>
        </SidePanel>

        <Workspace>
          <Viewport>
            <ViewCube aria-label="顶视图">上</ViewCube>
            <Pointer width="14" height="20" viewBox="0 0 14 20" aria-hidden="true">
              <path d="M.8 1v15l3.600-3.300 2.300 5.600 2.600-1-2.300-5.500H12z" fill="#ffffff" stroke="#33353a" />
            </Pointer>
            <AssistBall aria-label="助手">
              <Icon size={38}>
                <path d="M1 20h15M22 20h15" stroke="#d6ebff" strokeWidth="1.500" strokeDasharray="6 1" />
                <path d="M19 17v1.500M19 21v2M23 3l8 5M24 36q8-1 10-3" stroke="#a9d3ff" strokeWidth="1.200" />
              </Icon>
            </AssistBall>
            <Axes width="110" height="106" viewBox="0 0 110 106">
              <path d="M15.500 33v60" stroke="#38cdaa" strokeWidth="2" />
              <path d="M16 93.500h60" stroke="#e3151c" strokeWidth="2" />
              <g fill="#55565a" fontSize="19" textAnchor="middle">
                <text x="15" y="22">Y</text>
                <text x="15" y="100">Z</text>
                <text x="93" y="100">X</text>
              </g>
            </Axes>
          </Viewport>
          <CommandRow>
            <CommandBox>
              <Grip />
              <CommandInput aria-label="命令" placeholder="在此输入命令" />
              <CommandToggle aria-label="展开命令历史"><Chevron /></CommandToggle>
            </CommandBox>
          </CommandRow>
        </Workspace>
      </Main>

      <StatusBar>
        <StatusTools>
          {fileTools.map(([label, d]) => (
            <StatusTool key={label} aria-label={label}><Icon>{d}</Icon></StatusTool>
          ))}
          <Divider />
          {viewTools.map(([label, d]) => (
            <StatusTool key={label} aria-label={label}><Icon>{d}</Icon></StatusTool>
          ))}
          <Divider />
          <StatusTool aria-label="线框"><Cube /></StatusTool>
          <StatusTool aria-label="透明线框">
            <Icon><path d="M8 1l6 3v8l-6 3-6-3V4zM8 1v14M2 4l12 8M14 4L2 12" /></Icon>
          </StatusTool>
          <StatusTool $on aria-label="着色线框"><Cube left="#a2b3b6" right="#dbe9e8" top="#ffffff" /></StatusTool>
          <StatusTool aria-label="着色"><Cube left="#c2d8de" right="#a9c5d0" top="#eaf7f8" line="#5f8d9c" /></StatusTool>
          <StatusTool aria-label="渲染"><Cube left="#ccd9de" right="#b3c2c9" top="#f1f3f5" line="#e3e9eb" /></StatusTool>
          <Divider />
          <StatusTool aria-label="剖切">
            <Icon><path d="M1 4.500l7-3 7 .5v8.500l-9 4-4-3z" fill="#eef3f7" /><path d="M1 4.500L7 7l8-5v8.500l-9 4z" fill="#c3d2de" /></Icon>
          </StatusTool>
          <StatusTool aria-label="图层">
            <Icon>
              <path d="M0 3h7M0 8h5M0 13h3M4 15L13 1" />
              <path d="M11 4h5M10 9h6M8 13.500h8" stroke={teal} strokeWidth="2.500" />
            </Icon>
          </StatusTool>
          <StatusTool aria-label="更多">
            <Icon size={10} w={1.3}><path d="M1.500 5L5 1.500 8.500 5M1.500 9L5 5.500 8.500 9" /></Icon>
          </StatusTool>
          <Divider />
          <StatusTool aria-label="缩小"><Icon size={8}><path d="M0 4h8" stroke="#a3a4a6" strokeWidth="1.500" /></Icon></StatusTool>
          <ZoomSlider type="range" aria-label="缩放比例" min={0} max={100} defaultValue={56} />
          <StatusTool aria-label="放大"><Icon size={8}><path d="M0 4h8M4 0v8" stroke="#a3a4a6" strokeWidth="1.500" /></Icon></StatusTool>
        </StatusTools>
        <Coordinates>1577.91 , 5416.50 , 0.00</Coordinates>
        <StatusTools $end>
          <StatusTool aria-label="工作平面">
            <Icon><path d="M10 9.500H1l3-7h11L13 7M4 9.500l3 3" /><circle cx="11" cy="12" r="2.500" stroke={teal} fill="#e2f5f6" /></Icon>
          </StatusTool>
          <StatusTool $on aria-label="对象捕捉">
            <Icon><path d="M6 3.500h9.500v12h-12V7" /><path d="M.5.500h5v5h-5z" fill="#ffffff" stroke={teal} /></Icon>
          </StatusTool>
          <StatusTool $narrow aria-label="捕捉选项"><Chevron size={8} /></StatusTool>
          {snapTools.map(([label, on, d]) => (
            <StatusTool key={label} $on={on} aria-label={label}><Icon>{d}</Icon></StatusTool>
          ))}
          <StatusTool aria-label="动态输入">
            <Icon><path d="M3 6l5-5 5 5" stroke="#7f949c" /><path d="M1 7l7 7 7-7M8 12v4" /><path d="M0 5v5l4-3zM16 5v5l-4-3z" fill={navy} stroke="none" /><circle cx="8" cy="7" r="2" stroke={teal} /></Icon>
          </StatusTool>
          <StatusTool aria-label="设置">
            <Icon><path d="M6.500.500h3l.5 2.300 1.500.8 2.300-.8 1.600 2.600-1.800 1.600v2l1.800 1.600-1.600 2.600-2.300-.8-1.500.8-.5 2.300h-3L6 13.200l-1.500-.8-2.300.8L.6 10.600 2.400 9V7L.6 5.400l1.600-2.600 2.300.8L6 2.800z" fill="#b5dfe3" stroke="#3a7f92" /><circle cx="8" cy="8" r="2.600" fill="#ffffff" stroke="#3a7f92" /></Icon>
          </StatusTool>
        </StatusTools>
      </StatusBar>

      <Taskbar>
        <StartButton aria-label="开始菜单">
          <Icon size={24}>
            <path d="M0 0h11.500v11.500H0zM12.500 0H24v11.500H12.500zM0 12.500h11.500V24H0zM12.500 12.500H24V24H12.500z" fill="#3cb4f7" stroke="none" />
          </Icon>
        </StartButton>
        <SearchBox>
          <Icon size={16} w={1.6}><circle cx="7" cy="7" r="5.500" /><path d="M11 11l4 4" /></Icon>
          <SearchInput aria-label="搜索" placeholder="搜索" />
        </SearchBox>
        {taskApps.map(([label, icon]) => (
          <TaskButton key={label} aria-label={label}>{icon}</TaskButton>
        ))}
        <Tray>
          <TrayButton aria-label="显示隐藏的图标"><Chevron size={12} /></TrayButton>
          <TrayButton aria-label="微信"><WeChat size={16} /></TrayButton>
          <TrayButton aria-label="企业微信"><WeCom size={16} /></TrayButton>
          <TrayButton aria-label="输入法"><InputMode>中</InputMode></TrayButton>
          <QuickSettings>
            <TrayButton $tight aria-label="网络">
              <Icon size={16} w={1.4}><path d="M1 6a10 10 0 0 1 14 0M3.300 8.500a6.700 6.700 0 0 1 9.400 0M5.500 10.800a3.600 3.600 0 0 1 5 0" /><circle cx="8" cy="13" r="1.300" fill="currentColor" stroke="none" /></Icon>
            </TrayButton>
            <TrayButton $tight aria-label="音量">
              <Icon size={16} w={1.3}><path d="M1 6v4h2.500L7.500 14V2L3.500 6zM9.500 6a3 3 0 0 1 0 4" /><path d="M11.500 4a6 6 0 0 1 0 8M13.500 2.500a8 8 0 0 1 0 11" stroke="#5a5b5e" /></Icon>
            </TrayButton>
            <TrayButton $tight aria-label="电池">
              <Icon size={16} w={1.3}><path d="M6 3.500h7.500v10h-12V9" /><path d="M6.500 6.500h5.500v5.500H3V9.500z" fill="currentColor" stroke="none" /><path d="M15 7v3" strokeWidth="2" /><path d="M3 1L0 6h2v3l3.500-5H3z" fill="currentColor" stroke="none" /></Icon>
            </TrayButton>
          </QuickSettings>
          <Clock>15:11<br />2023/12/22</Clock>
          <TrayButton $tight aria-label="通知">
            <Icon size={16} w={1.3}><path d="M9 2.500a4.500 4.500 0 0 0-6 4.500v3l-1.500 2.500h12L12 10M5.500 13a2 2 0 0 0 4 0" /><path d="M6.500 6h3l-3 3.500h3M11.500 1h3l-3 3.500h3" /></Icon>
          </TrayButton>
        </Tray>
      </Taskbar>
    </Shell>
  );
}
